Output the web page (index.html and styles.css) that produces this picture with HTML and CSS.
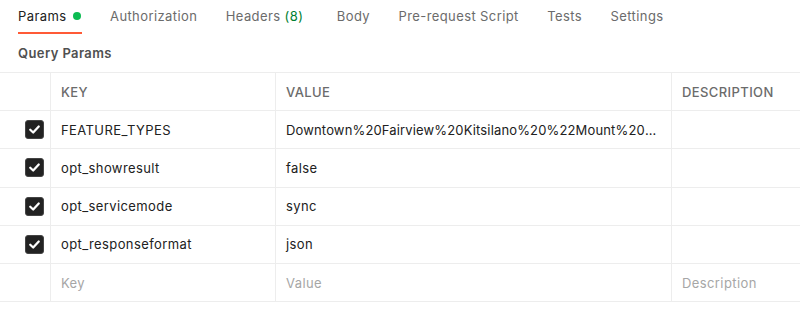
FILE: index.html
```html
<!DOCTYPE html>
<html>
<head>
<meta charset="utf-8">
<link rel="stylesheet" href="styles.css">
</head>
<body>
<div class="tabs">
  <div class="tab active">Params <span class="dot"></span></div>
  <div class="tab">Authorization</div>
  <div class="tab">Headers <span class="count">(8)</span></div>
  <div class="tab">Body</div>
  <div class="tab">Pre-request Script</div>
  <div class="tab">Tests</div>
  <div class="tab">Settings</div>
</div>
<div class="section-title">Query Params</div>
<div class="table">
  <div class="row head">
    <div class="cell chk"></div>
    <div class="cell key">KEY</div>
    <div class="cell val">VALUE</div>
    <div class="cell desc">DESCRIPTION</div>
  </div>
  <div class="row">
    <div class="cell chk"><span class="box"><svg viewBox="0 0 18 18"><path d="M4.5 9.3 L7.6 12.2 L13.5 5.8" /></svg></span></div>
    <div class="cell key">FEATURE_TYPES</div>
    <div class="cell val"><span class="ellip">Downtown%20Fairview%20Kitsilano%20%22Mount%20Pleasant%22</span></div>
    <div class="cell desc"></div>
  </div>
  <div class="row">
    <div class="cell chk"><span class="box"><svg viewBox="0 0 18 18"><path d="M4.5 9.3 L7.6 12.2 L13.5 5.8" /></svg></span></div>
    <div class="cell key">opt_showresult</div>
    <div class="cell val">false</div>
    <div class="cell desc"></div>
  </div>
  <div class="row">
    <div class="cell chk"><span class="box"><svg viewBox="0 0 18 18"><path d="M4.5 9.3 L7.6 12.2 L13.5 5.8" /></svg></span></div>
    <div class="cell key">opt_servicemode</div>
    <div class="cell val">sync</div>
    <div class="cell desc"></div>
  </div>
  <div class="row">
    <div class="cell chk"><span class="box"><svg viewBox="0 0 18 18"><path d="M4.5 9.3 L7.6 12.2 L13.5 5.8" /></svg></span></div>
    <div class="cell key">opt_responseformat</div>
    <div class="cell val">json</div>
    <div class="cell desc"></div>
  </div>
  <div class="row">
    <div class="cell chk"></div>
    <div class="cell key ph">Key</div>
    <div class="cell val ph">Value</div>
    <div class="cell desc ph">Description</div>
  </div>
</div>
</body>
</html>
```

FILE: styles.css
```css
* { box-sizing: border-box; }
html, body { margin: 0; padding: 0; background: #ffffff; }
body {
  font-family: Inter, "Noto Sans", sans-serif;
  font-size: 13px;
  letter-spacing: 0.4px;
  color: #212121;
  width: 800px;
  overflow: hidden;
}
.tabs {
  display: flex;
  gap: 28.5px;
  padding-left: 18px;
  height: 34px;
}
.tab {
  display: flex;
  align-items: center;
  color: #6b6b6b;
  height: 34px;
  padding-bottom: 2px;
  white-space: pre;
}
.tab.active {
  color: #212121;
  border-bottom: 2px solid #ff5a36;
  padding-bottom: 0;
}
.dot {
  display: inline-block;
  width: 8px;
  height: 8px;
  border-radius: 50%;
  background: #0cbb52;
  margin-left: 2px;
  margin-right: 1px;
}
.count { color: #007f31; margin-right: 5px; }
.section-title {
  padding-left: 18px;
  height: 38px;
  display: flex;
  align-items: center;
  font-weight: 600;
  color: #505050;
}
.table {
  border-top: 1px solid #ededed;
}
.row {
  display: grid;
  grid-template-columns: 51px 225px 396px 1fr;
  height: 38.2px;
  border-bottom: 1px solid #ededed;
}
.cell {
  display: flex;
  align-items: center;
  padding: 0 10px;
  border-right: 1px solid #ededed;
  overflow: hidden;
  white-space: nowrap;
}
.cell.val { padding-right: 12px; }
.cell.desc { border-right: none; }
.head .cell { color: #6b6b6b; font-weight: 500; }
.cell.chk { justify-content: flex-end; padding: 0 6px 0 0; }
.box {
  width: 19px;
  height: 19px;
  border-radius: 3px;
  background: #222222;
  border: 1px solid #444444;
  display: flex;
  align-items: center;
  justify-content: center;
}
.box svg { width: 17px; height: 17px; }
.box path {
  fill: none;
  stroke: #ffffff;
  stroke-width: 2.4;
  stroke-linecap: round;
  stroke-linejoin: round;
}
.ellip {
  display: block;
  overflow: hidden;
  text-overflow: ellipsis;
  white-space: nowrap;
  min-width: 0;
  letter-spacing: 0.15px;
}
.ph { color: #a6a6a6; }
```
